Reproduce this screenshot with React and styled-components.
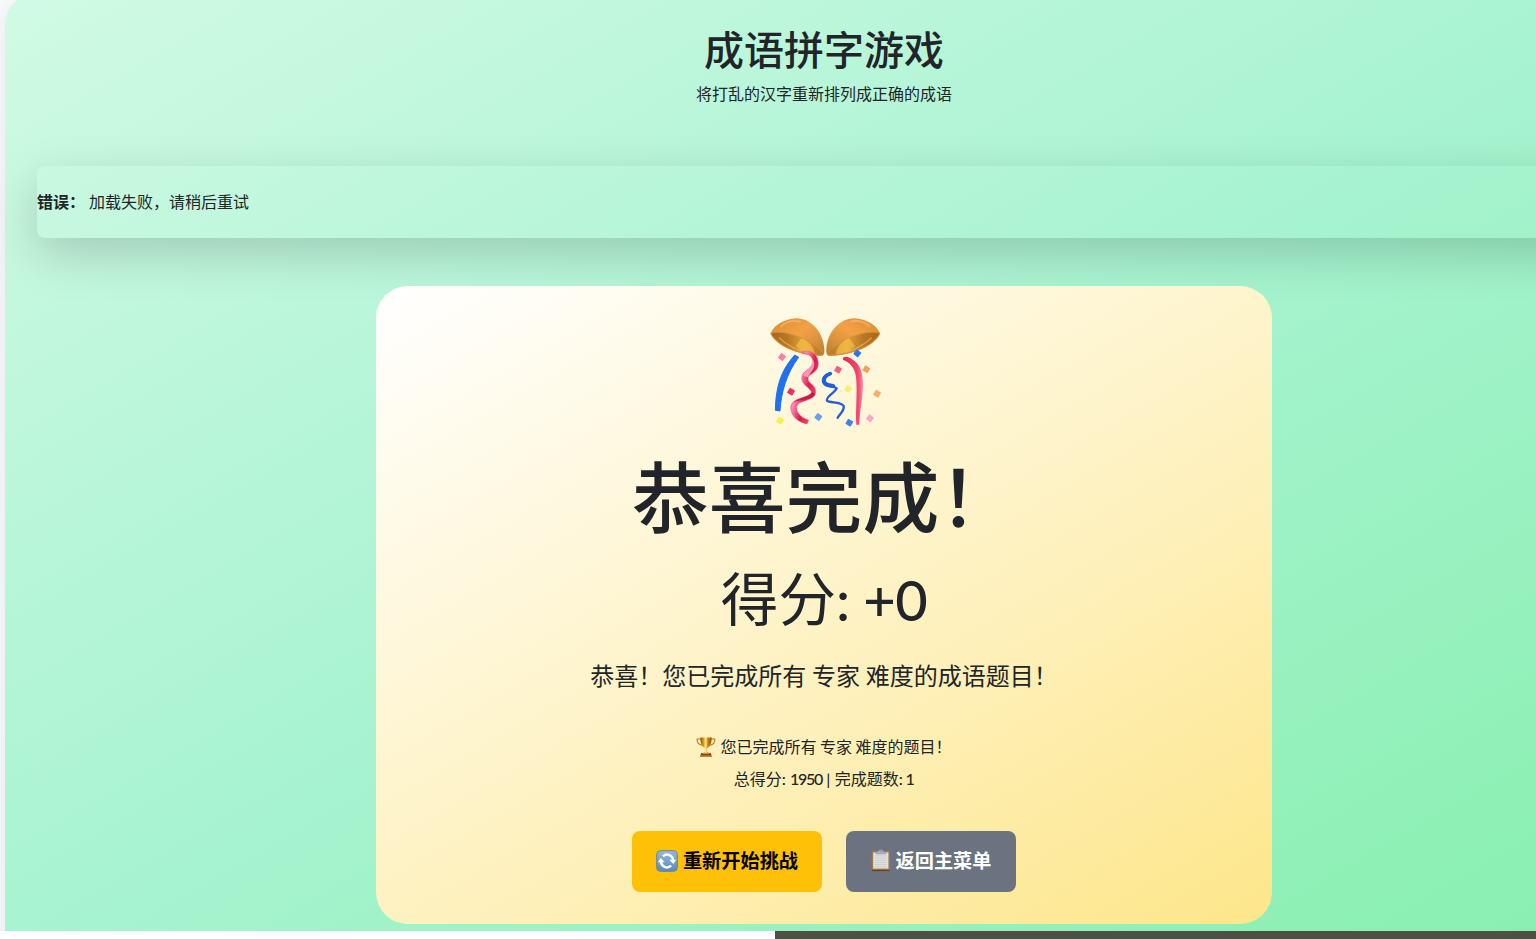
import React from "react";
import styled, { createGlobalStyle } from "styled-components";

const GlobalStyle = createGlobalStyle`
  *, *::before, *::after { box-sizing: border-box; }
  html, body { margin: 0; padding: 0; }
  body {
    background: #fff;
    color: #212529;
    font-family: "Noto Sans CJK SC", "Noto Sans", sans-serif;
    font-size: 16px;
    line-height: 24px;
    overflow: hidden;
  }
`;

const Page = styled.div`
  width: 100vw;
  height: 939px;
  overflow: hidden;
  display: flex;
  flex-direction: column;
`;

const Stage = styled.main`
  height: 931px;
  flex: none;
  overflow: hidden;
  padding-left: 5px;
  background: #f8f9fa;
`;

const GamePanel = styled.section`
  width: 1638px;
  height: 980px;
  margin-top: -7px;
  padding: 31px 32px 32px;
  border-radius: 32px;
  background: linear-gradient(150deg, #d1fae5 0%, #a7f3d0 50%, #86efac 100%);
  box-shadow: 0 10px 30px rgba(40, 40, 90, 0.08);
  display: flex;
  flex-direction: column;
  align-items: center;
`;

const Title = styled.h1`
  margin: 0 0 9px;
  font-size: 40px;
  line-height: 48px;
  font-weight: 500;
`;

const Subtitle = styled.p`
  margin: 0;
`;

const Alert = styled.div`
  align-self: stretch;
  height: 72px;
  margin: 61px 0 48px;
  padding: 23px 0 25px;
  border-radius: 8px;
  box-shadow: 0 16px 48px rgba(0, 0, 0, 0.175);
  display: flex;
  gap: 4px;
`;

const ResultCard = styled.section`
  width: 896px;
  height: 638px;
  padding: 32px;
  border-radius: 32px;
  background: linear-gradient(150deg, #ffffff 0%, #fef3c7 50%, #fde68a 100%);
  display: flex;
  flex-direction: column;
  align-items: center;
`;

const Headline = styled.h2`
  margin: 22px 0 14px;
  font-size: 76.8px;
  line-height: 92px;
  font-weight: 500;
`;

const Score = styled.div`
  height: 86px;
  font-size: 57.6px;
  line-height: 85px;
  display: flex;
`;

const Digits = styled.span`
  font-family: Lato, sans-serif;
  font-weight: 500;
  letter-spacing: ${(p) => p.$spacing || "0"};
`;

const Points = styled(Digits)`
  padding-top: 4px;
  font-size: 56px;
  line-height: 84px;
  white-space: pre;
`;

const Message = styled.p`
  margin: 17px 0 41px;
  font-size: 24px;
  line-height: 36px;
  word-spacing: 0.4px;
`;

const InfoLine = styled.p`
  margin: 0 0 8px;
  display: flex;
  align-items: center;
  gap: 4px;
  white-space: pre;
`;

const Actions = styled.div`
  display: flex;
  gap: 24px;
  margin-top: 32px;
`;

const ActionButton = styled.button`
  width: ${(p) => p.$width};
  height: 61px;
  padding: 0 0 2px;
  border: 0;
  border-radius: 8px;
  background: ${(p) => p.$background};
  color: ${(p) => p.$color};
  font: 700 19.2px/29px "Noto Sans CJK SC", sans-serif;
  display: flex;
  align-items: center;
  justify-content: center;
  gap: 5px;
`;

const BottomBar = styled.footer`
  flex: 1;
  margin-left: 775px;
  background: #4f4f43;
`;

const Drawing = styled.svg`
  display: block;
  flex: none;
  overflow: visible;
`;

const confetti = [
  [81, 156, "#f881a8"], [108, 260, "#ed2e62"], [75, 347, "#fcf047"],
  [190, 336, "#6b9df5"], [249, 194, "#f55c86"], [279, 252, "#fbef72"],
  [307, 145, "#2878e8"], [334, 193, "#f5a052"], [366, 266, "#fbac65"],
  [345, 340, "#f8a8cf"], [283, 353, "#3e82ed"],
];

function Bell() {
  return (
    <>
      <path d="M46 86C56 62 88 41 124 40C170 41 205 82 208 132C209 147 206 153 195 152C140 150 64 127 46 86Z" fill="url(#shell)" />
      <path d="M48 84C74 75 124 89 160 109C189 125 205 141 204 150C150 154 66 128 48 84Z" fill="url(#bowl)" stroke="#d8923b" strokeWidth="3" />
      <path d="M122 124L139 100C165 110 176 127 179 148C158 146 140 140 122 124Z" fill="#f6c346" opacity=".65" />
      <path d="M72 98C94 118 121 134 151 142" fill="none" stroke="#efb35f" strokeWidth="4" opacity=".7" />
      <path d="M77 65C93 50 117 46 137 50" fill="none" stroke="#ffc078" strokeWidth="6" opacity=".55" />
    </>
  );
}

function PartyBall() {
  return (
    <Drawing width="112" height="108" viewBox="39 39 336 324" aria-hidden="true">
      <defs>
        <linearGradient id="shell" x1="0" y1="0" x2="1" y2="1">
          <stop offset="0" stopColor="#d88a2c" />
          <stop offset=".45" stopColor="#f3a146" />
          <stop offset=".7" stopColor="#dc943e" />
          <stop offset="1" stopColor="#b87b2b" />
        </linearGradient>
        <linearGradient id="bowl">
          <stop offset="0" stopColor="#a7651d" />
          <stop offset=".3" stopColor="#b97623" />
          <stop offset=".65" stopColor="#dea33a" />
          <stop offset=".85" stopColor="#c5832b" />
          <stop offset="1" stopColor="#b5772b" />
        </linearGradient>
        <linearGradient id="pink" x1="0" y1="0" x2="1" y2=".7">
          <stop offset="0" stopColor="#e9225b" />
          <stop offset=".4" stopColor="#fa8bb2" />
          <stop offset=".65" stopColor="#dc1c4c" />
          <stop offset="1" stopColor="#f75585" />
        </linearGradient>
        <linearGradient id="redstrip">
          <stop offset="0" stopColor="#e9234f" />
          <stop offset=".75" stopColor="#f5476e" />
          <stop offset="1" stopColor="#fa89a6" />
        </linearGradient>
      </defs>
      <Bell />
      <g transform="translate(422 0) scale(-1 1)"><Bell /></g>
      <path d="M119 150C85 190 63 230 61 316L75 318C78 263 95 204 131 157Z" fill="#2170ec" stroke="#2170ec" strokeWidth="3" />
      <path d="M140 140C173 132 191 154 190 178C187 207 160 205 159 221C159 237 183 237 182 262C180 292 125 282 125 309C125 330 147 340 161 346L156 357C130 351 108 335 107 308C109 275 156 282 171 263C165 247 140 240 140 218C142 195 172 193 174 171C174 153 158 145 143 147Z" fill="url(#pink)" stroke="#ee4c7c" strokeWidth="1.5" />
      <path d="M171 260C164 277 132 276 115 292C137 281 173 287 181 267Z" fill="#c41b4b" />
      <path d="M145 213C145 199 177 183 174 164C188 186 163 204 159 216Z" fill="#ffa4c3" opacity=".85" />
      <path d="M228 206C207 207 199 224 207 236C215 248 236 242 245 250C242 262 211 275 216 287C224 295 258 288 266 303C269 318 254 326 248 338" fill="none" stroke="#265bd5" strokeWidth="7" strokeLinecap="round" strokeLinejoin="round" />
      <path d="M225 206C211 211 203 222 209 233C214 242 226 240 235 243" fill="none" stroke="#1c60dc" strokeWidth="11" strokeLinecap="round" />
      <path d="M265 157L276 155C329 174 328 229 320 287C316 316 313 339 313 359L304 359C301 315 308 262 303 216C300 189 286 174 264 164Z" fill="url(#redstrip)" />
      {confetti.map(([x, y, color], i) => (
        <rect key={i} x={x - 9} y={y - 9} width="18" height="18" rx="2" fill={color} transform={`rotate(${i % 3 === 0 ? 38 : 30} ${x} ${y})`} />
      ))}
    </Drawing>
  );
}

function Trophy() {
  return (
    <Drawing width="20" height="22" viewBox="0 -2 20 22" aria-hidden="true">
      <defs>
        <linearGradient id="cup">
          <stop offset="0" stopColor="#8d4c08" />
          <stop offset=".3" stopColor="#e59f17" />
          <stop offset=".48" stopColor="#fff0a0" />
          <stop offset=".65" stopColor="#d18b08" />
          <stop offset="1" stopColor="#8e4704" />
        </linearGradient>
      </defs>
      <path d="M5 2H1.2C.4 5.4 3 8 7.2 8.5M15 2h3.8c.8 3.4-1.8 6-6 6.5" fill="none" stroke="#bc7610" strokeWidth="1.1" />
      <path d="M4.4.6h11.2c.2 5-1.5 9-4.5 10.7v3.5l2.4 1.7h-7l2.4-1.7v-3.5C5.9 9.6 4.2 5.6 4.4.6Z" fill="url(#cup)" />
      <path d="M5.2 16h9.6l1.1 3.7H4.1z" fill="#914008" />
      <path d="M6.5 16.5h7M5 19h10" stroke="#e29a4a" strokeWidth=".9" />
    </Drawing>
  );
}

function RestartIcon() {
  return (
    <Drawing width="22" height="22" viewBox="0 0 23 23" aria-hidden="true">
      <defs>
        <linearGradient id="tile" x2="0" y2="1">
          <stop offset="0" stopColor="#96bad8" />
          <stop offset="1" stopColor="#588bb8" />
        </linearGradient>
      </defs>
      <rect x=".7" y=".7" width="21.6" height="21.6" rx="4" fill="url(#tile)" stroke="#66839a" />
      <path d="M7.2 6.6C11 3 16.8 5 18 10.4" fill="none" stroke="#fff" strokeWidth="2.6" />
      <path d="M14 10.2H21.2L18 14.6Z" fill="#fff" />
      <path d="M15.8 16.4C12 20 6.2 18 5 12.6" fill="none" stroke="#fff" strokeWidth="2.6" />
      <path d="M9 12.8H1.8L5 8.4Z" fill="#fff" />
    </Drawing>
  );
}

function ClipboardIcon() {
  return (
    <Drawing width="20" height="23" viewBox="0 0 20 23" aria-hidden="true">
      <rect x=".8" y="2" width="18" height="20" rx="1" fill="#a87743" />
      <path d="M1 20.8h17.8v1.3H1z" fill="#684421" />
      <path d="M2.2 3.4h15.2v16.2H2.2z" fill="#e1e1df" />
      <path d="M3.7 6.8h12M3.7 9h12M3.7 11.2h12M3.7 13.4h12M3.7 15.6h12M3.7 17.8h12" stroke="#c3c6c8" strokeWidth=".7" />
      <path d="M5 4.8V2.9l2.5-.7C8 .1 11.8.1 12.2 2.2l2.5.7v1.9z" fill="#aeb4bb" stroke="#82888e" strokeWidth=".6" />
      <circle cx="9.9" cy="1.9" r=".7" fill="#777d82" />
    </Drawing>
  );
}

export default function App() {
  return (
    <Page>
      <GlobalStyle />
      <Stage>
        <GamePanel>
          <Title>成语拼字游戏</Title>
          <Subtitle>将打乱的汉字重新排列成正确的成语</Subtitle>
          <Alert role="alert">
            <strong>错误：</strong>
            <span>加载失败，请稍后重试</span>
          </Alert>
          <ResultCard>
            <PartyBall />
            <Headline>恭喜完成！</Headline>
            <Score>得分<Points $spacing="-0.5px">: +0</Points></Score>
            <Message>恭喜！您已完成所有 专家 难度的成语题目！</Message>
            <InfoLine><Trophy /><span>您已完成所有 专家 难度的题目！</span></InfoLine>
            <InfoLine>
              <span>总得分<Digits>: </Digits><Digits $spacing="-1.2px">1950</Digits><Digits $spacing="0.1px"> | </Digits>完成题数<Digits $spacing="-0.6px">: 1</Digits></span>
            </InfoLine>
            <Actions>
              <ActionButton $width="190px" $background="#ffc107" $color="#000"><RestartIcon />重新开始挑战</ActionButton>
              <ActionButton $width="170px" $background="#6b7280" $color="#fff"><ClipboardIcon />返回主菜单</ActionButton>
            </Actions>
          </ResultCard>
        </GamePanel>
      </Stage>
      <BottomBar />
    </Page>
  );
}
